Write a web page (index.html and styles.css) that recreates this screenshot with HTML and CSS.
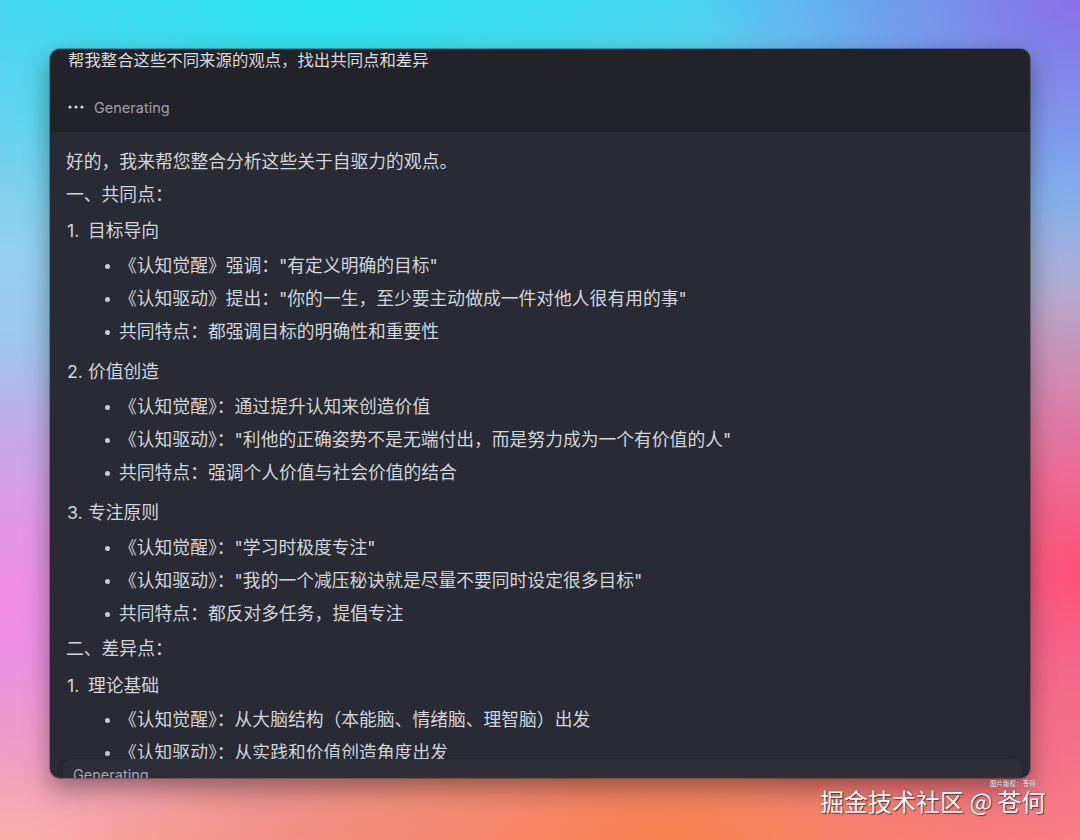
FILE: index.html
```html
<!DOCTYPE html>
<html lang="zh-CN">
<head>
<meta charset="utf-8">
<title>Generating</title>
<link rel="stylesheet" href="styles.css">
</head>
<body>
<div class="desktop">
  <div class="window">
    <div class="header">
      <div class="question">帮我整合这些不同来源的观点，找出共同点和差异</div>
      <div class="status">
        <svg class="dots" width="16" height="4" viewBox="0 0 16 4"><circle cx="2" cy="2" r="1.6"/><circle cx="8" cy="2" r="1.6"/><circle cx="14" cy="2" r="1.6"/></svg>
        <span>Generating</span>
      </div>
    </div>
    <div class="content">
      <p>好的，我来帮您整合分析这些关于自驱力的观点。</p>
      <p>一、共同点：</p>
      <ol>
        <li>
          <div class="title">目标导向</div>
          <ul>
            <li>《认知觉醒》强调："有定义明确的目标"</li>
            <li>《认知驱动》提出："你的一生，至少要主动做成一件对他人很有用的事"</li>
            <li>共同特点：都强调目标的明确性和重要性</li>
          </ul>
        </li>
        <li>
          <div class="title">价值创造</div>
          <ul>
            <li>《认知觉醒》：通过提升认知来创造价值</li>
            <li>《认知驱动》："利他的正确姿势不是无端付出，而是努力成为一个有价值的人"</li>
            <li>共同特点：强调个人价值与社会价值的结合</li>
          </ul>
        </li>
        <li>
          <div class="title">专注原则</div>
          <ul>
            <li>《认知觉醒》："学习时极度专注"</li>
            <li>《认知驱动》："我的一个减压秘诀就是尽量不要同时设定很多目标"</li>
            <li>共同特点：都反对多任务，提倡专注</li>
          </ul>
        </li>
      </ol>
      <p>二、差异点：</p>
      <ol class="second">
        <li>
          <div class="title">理论基础</div>
          <ul>
            <li>《认知觉醒》：从大脑结构（本能脑、情绪脑、理智脑）出发</li>
            <li>《认知驱动》：从实践和价值创造角度出发</li>
          </ul>
        </li>
      </ol>
    </div>
    <div class="footer">Generating .</div>
  </div>
  <div class="watermark">
    <span class="copyright">图片版权：苍何</span>
    掘金技术社区 @ 苍何
  </div>
</div>
</body>
</html>
```

FILE: styles.css
```css
html, body {
  margin: 0;
  padding: 0;
}
body {
  width: 1080px;
  height: 840px;
  overflow: hidden;
  font-family: Inter, "Noto Sans CJK SC", sans-serif;
}
.desktop {
  position: relative;
  width: 1080px;
  height: 840px;
  box-sizing: border-box;
  padding: 49px 50px 62px 50px;
  background:
    radial-gradient(ellipse 440px 280px at 30% 0%, rgba(40, 230, 240, 0.95), rgba(40, 230, 240, 0) 100%),
    radial-gradient(ellipse 380px 300px at 100% 0%, rgba(140, 110, 232, 1), rgba(140, 110, 232, 0) 100%),
    radial-gradient(ellipse 300px 260px at 0% 72%, rgba(242, 140, 232, 1), rgba(242, 140, 232, 0) 100%),
    radial-gradient(ellipse 420px 380px at 100% 68%, rgba(255, 80, 120, 1), rgba(255, 80, 120, 0) 100%),
    radial-gradient(ellipse 620px 260px at 62% 100%, rgba(246, 128, 80, 1), rgba(246, 128, 80, 0) 100%),
    radial-gradient(ellipse 260px 200px at 0% 100%, rgba(250, 180, 160, 1), rgba(250, 180, 160, 0) 100%),
    linear-gradient(180deg, #4fd0f0 0%, #92d0ee 30%, #b8b4e6 60%, #f29aa8 100%);
}
.window {
  height: 729px;
  border-radius: 10px;
  background: #282b33;
  overflow: hidden;
  display: flex;
  flex-direction: column;
  box-shadow: 0 10px 26px rgba(0, 0, 0, 0.4), 0 0 0 1px rgba(0, 0, 0, 0.25);
}
.header {
  background: #212329;
  padding: 0 18px 14px 18px;
  flex: none;
}
.question {
  font-size: 16.4px;
  line-height: 22px;
  color: #d9dadc;
}
.status {
  margin-top: 25px;
  height: 22px;
  display: flex;
  align-items: center;
  gap: 10px;
  color: #9ea2a9;
  font-size: 14.5px;
}
.dots {
  fill: #d3d5d9;
}
.content {
  flex: 1;
  min-height: 0;
  overflow: hidden;
  padding: 17px 16px 0 16px;
  font-size: 17.8px;
  line-height: 26px;
  color: #d3d5d9;
}
.content p {
  margin: 0 0 7px 0;
}
.content ol {
  list-style: none;
  margin: 10px 0 9px 0;
  padding: 0;
  counter-reset: item;
}
.content ol.second {
  margin-top: 11px;
}
.content ol > li {
  counter-increment: item;
}
.content ol > li + li {
  margin-top: 14px;
}
.title {
  margin-bottom: 9px;
}
.content ol.second .title {
  margin-bottom: 8px;
}
.title::before {
  content: counter(item) ".";
  display: inline-block;
  width: 21px;
  padding-left: 1px;
}
.content ul {
  list-style: none;
  margin: 0;
  padding: 0 0 0 39px;
}
.content ul li {
  display: flex;
  align-items: center;
}
.content ul li + li {
  margin-top: 7px;
}
.content ul li::before {
  content: "";
  flex: none;
  width: 5px;
  height: 5px;
  border-radius: 50%;
  background: #c9cbcf;
  margin-right: 9px;
}
.footer {
  flex: none;
  height: 13px;
  margin: 0 8px 0 13px;
  padding: 6px 10px 0 10px;
  border-top-left-radius: 8px;
  border-top-right-radius: 8px;
  background: #2c2f37;
  color: #a3a7ae;
  font-size: 14.5px;
  line-height: 20px;
  box-shadow: 0 -2px 6px rgba(0, 0, 0, 0.12);
}
.watermark {
  position: absolute;
  left: 820px;
  top: 784px;
  font-family: "Noto Sans CJK SC", sans-serif;
  font-size: 24px;
  line-height: 34px;
  color: #ffffff;
  text-shadow: 1px 1px 1px rgba(60, 30, 20, 0.75), 0 0 2px rgba(60, 30, 20, 0.4);
  white-space: nowrap;
}
.copyright {
  position: absolute;
  left: 170px;
  top: -5px;
  font-size: 6.5px;
  line-height: 8px;
  text-shadow: 0 0 1px rgba(60, 30, 20, 0.8);
}
```
